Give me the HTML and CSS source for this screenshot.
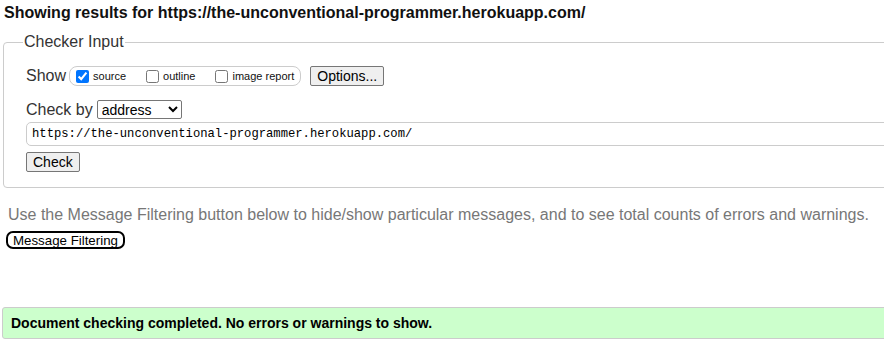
FILE: index.html
```html
<!DOCTYPE html>
<html lang="en">
<head>
    <meta charset="UTF-8">
    <meta name="viewport" content="width=device-width, initial-scale=1.0">
    <title>Showing results for https://the-unconventional-programmer.herokuapp.com/</title>
    <link rel="stylesheet" href="styles.css">
</head>
<body>
    <h2 class="title">Showing results for https://the-unconventional-programmer.herokuapp.com/</h2>
    <fieldset class="checker">
        <legend>Checker Input</legend>
        <div class="row">
            <span class="label">Show</span>
            <div class="shows">
                <label><input type="checkbox" checked> source</label>
                <label><input type="checkbox"> outline</label>
                <label><input type="checkbox"> image report</label>
            </div>
            <button class="btn">Options...</button>
        </div>
        <div class="row by">
            <span class="label">Check by</span>
            <select class="sel">
                <option>address</option>
            </select>
        </div>
        <input class="url" type="text" value="https://the-unconventional-programmer.herokuapp.com/">
        <div class="row">
            <button class="btn">Check</button>
        </div>
    </fieldset>
    <p class="hint">Use the Message Filtering button below to hide/show particular messages, and to see total counts of errors and warnings.</p>
    <button class="filter">Message Filtering</button>
    <div class="done">Document checking completed. No errors or warnings to show.</div>
</body>
</html>
```

FILE: styles.css
```css
body {
    font-family: "Liberation Sans", Arial, sans-serif;
    color: #000;
    background-color: #fff;
    margin: 0;
    overflow: hidden;
}
.title {
    font-size: 16px;
    font-weight: bold;
    margin: 4px 0 0 4px;
    color: #111;
}
.checker {
    margin: 11px -40px 0 3px;
    padding: 15px 0 15px 22px;
    border: 1px solid #ccc;
    border-radius: 4px;
    color: #333;
}
.checker legend {
    font-size: 16px;
    padding: 0 1px;
    margin-left: -3px;
    color: #333;
}
.row {
    display: flex;
    align-items: center;
}
.label {
    font-size: 16px;
    color: #333;
}
.shows {
    display: flex;
    align-items: center;
    gap: 20px;
    margin-left: 3px;
    padding: 0 6px 0 6px;
    border: 1px solid #ccc;
    border-radius: 8px;
    height: 18px;
}
.shows label {
    font-size: 11px;
    color: #111;
    display: flex;
    align-items: center;
}
.shows input {
    margin: 0 4px 0 0;
    width: 13px;
    height: 13px;
}
.btn {
    font-family: "Liberation Sans", Arial, sans-serif;
    font-size: 14px;
    padding: 0 6px;
    height: 20px;
    background: #efefef;
    border: 1px solid #767676;
    border-radius: 2px;
    color: #000;
}
.row .btn {
    margin-left: 9px;
}
.row:last-child .btn {
    margin-left: 0;
}
.by {
    margin-top: 14px;
}
.sel {
    font-family: "Liberation Sans", Arial, sans-serif;
    font-size: 14px;
    margin-left: 4px;
    width: 85px;
    height: 19px;
    border: 1px solid #767676;
    border-radius: 2px;
    background: #fff;
    color: #000;
}
.url {
    display: block;
    box-sizing: border-box;
    width: 100%;
    margin: 3px 0 6px;
    height: 24px;
    padding: 0 5px;
    font-family: "Liberation Mono", "DejaVu Sans Mono", monospace;
    font-size: 12.2px;
    border: 1px solid #ccc;
    border-radius: 5px;
    color: #000;
}
.hint {
    font-size: 16px;
    color: #777;
    margin: 18px 0 0 8px;
}
.filter {
    margin: 7px 0 0 6px;
    font-family: "Liberation Sans", Arial, sans-serif;
    font-size: 13.3px;
    padding: 0 5px;
    height: 18px;
    background: #fff;
    border: 2px solid #000;
    border-radius: 7px;
    color: #000;
}
.done {
    margin: 58px -10px 0 2px;
    padding: 7px 8px;
    font-size: 14px;
    font-weight: bold;
    background: #ccffcc;
    border: 1px solid #ccc;
    border-radius: 3px;
    color: #000;
}
```
